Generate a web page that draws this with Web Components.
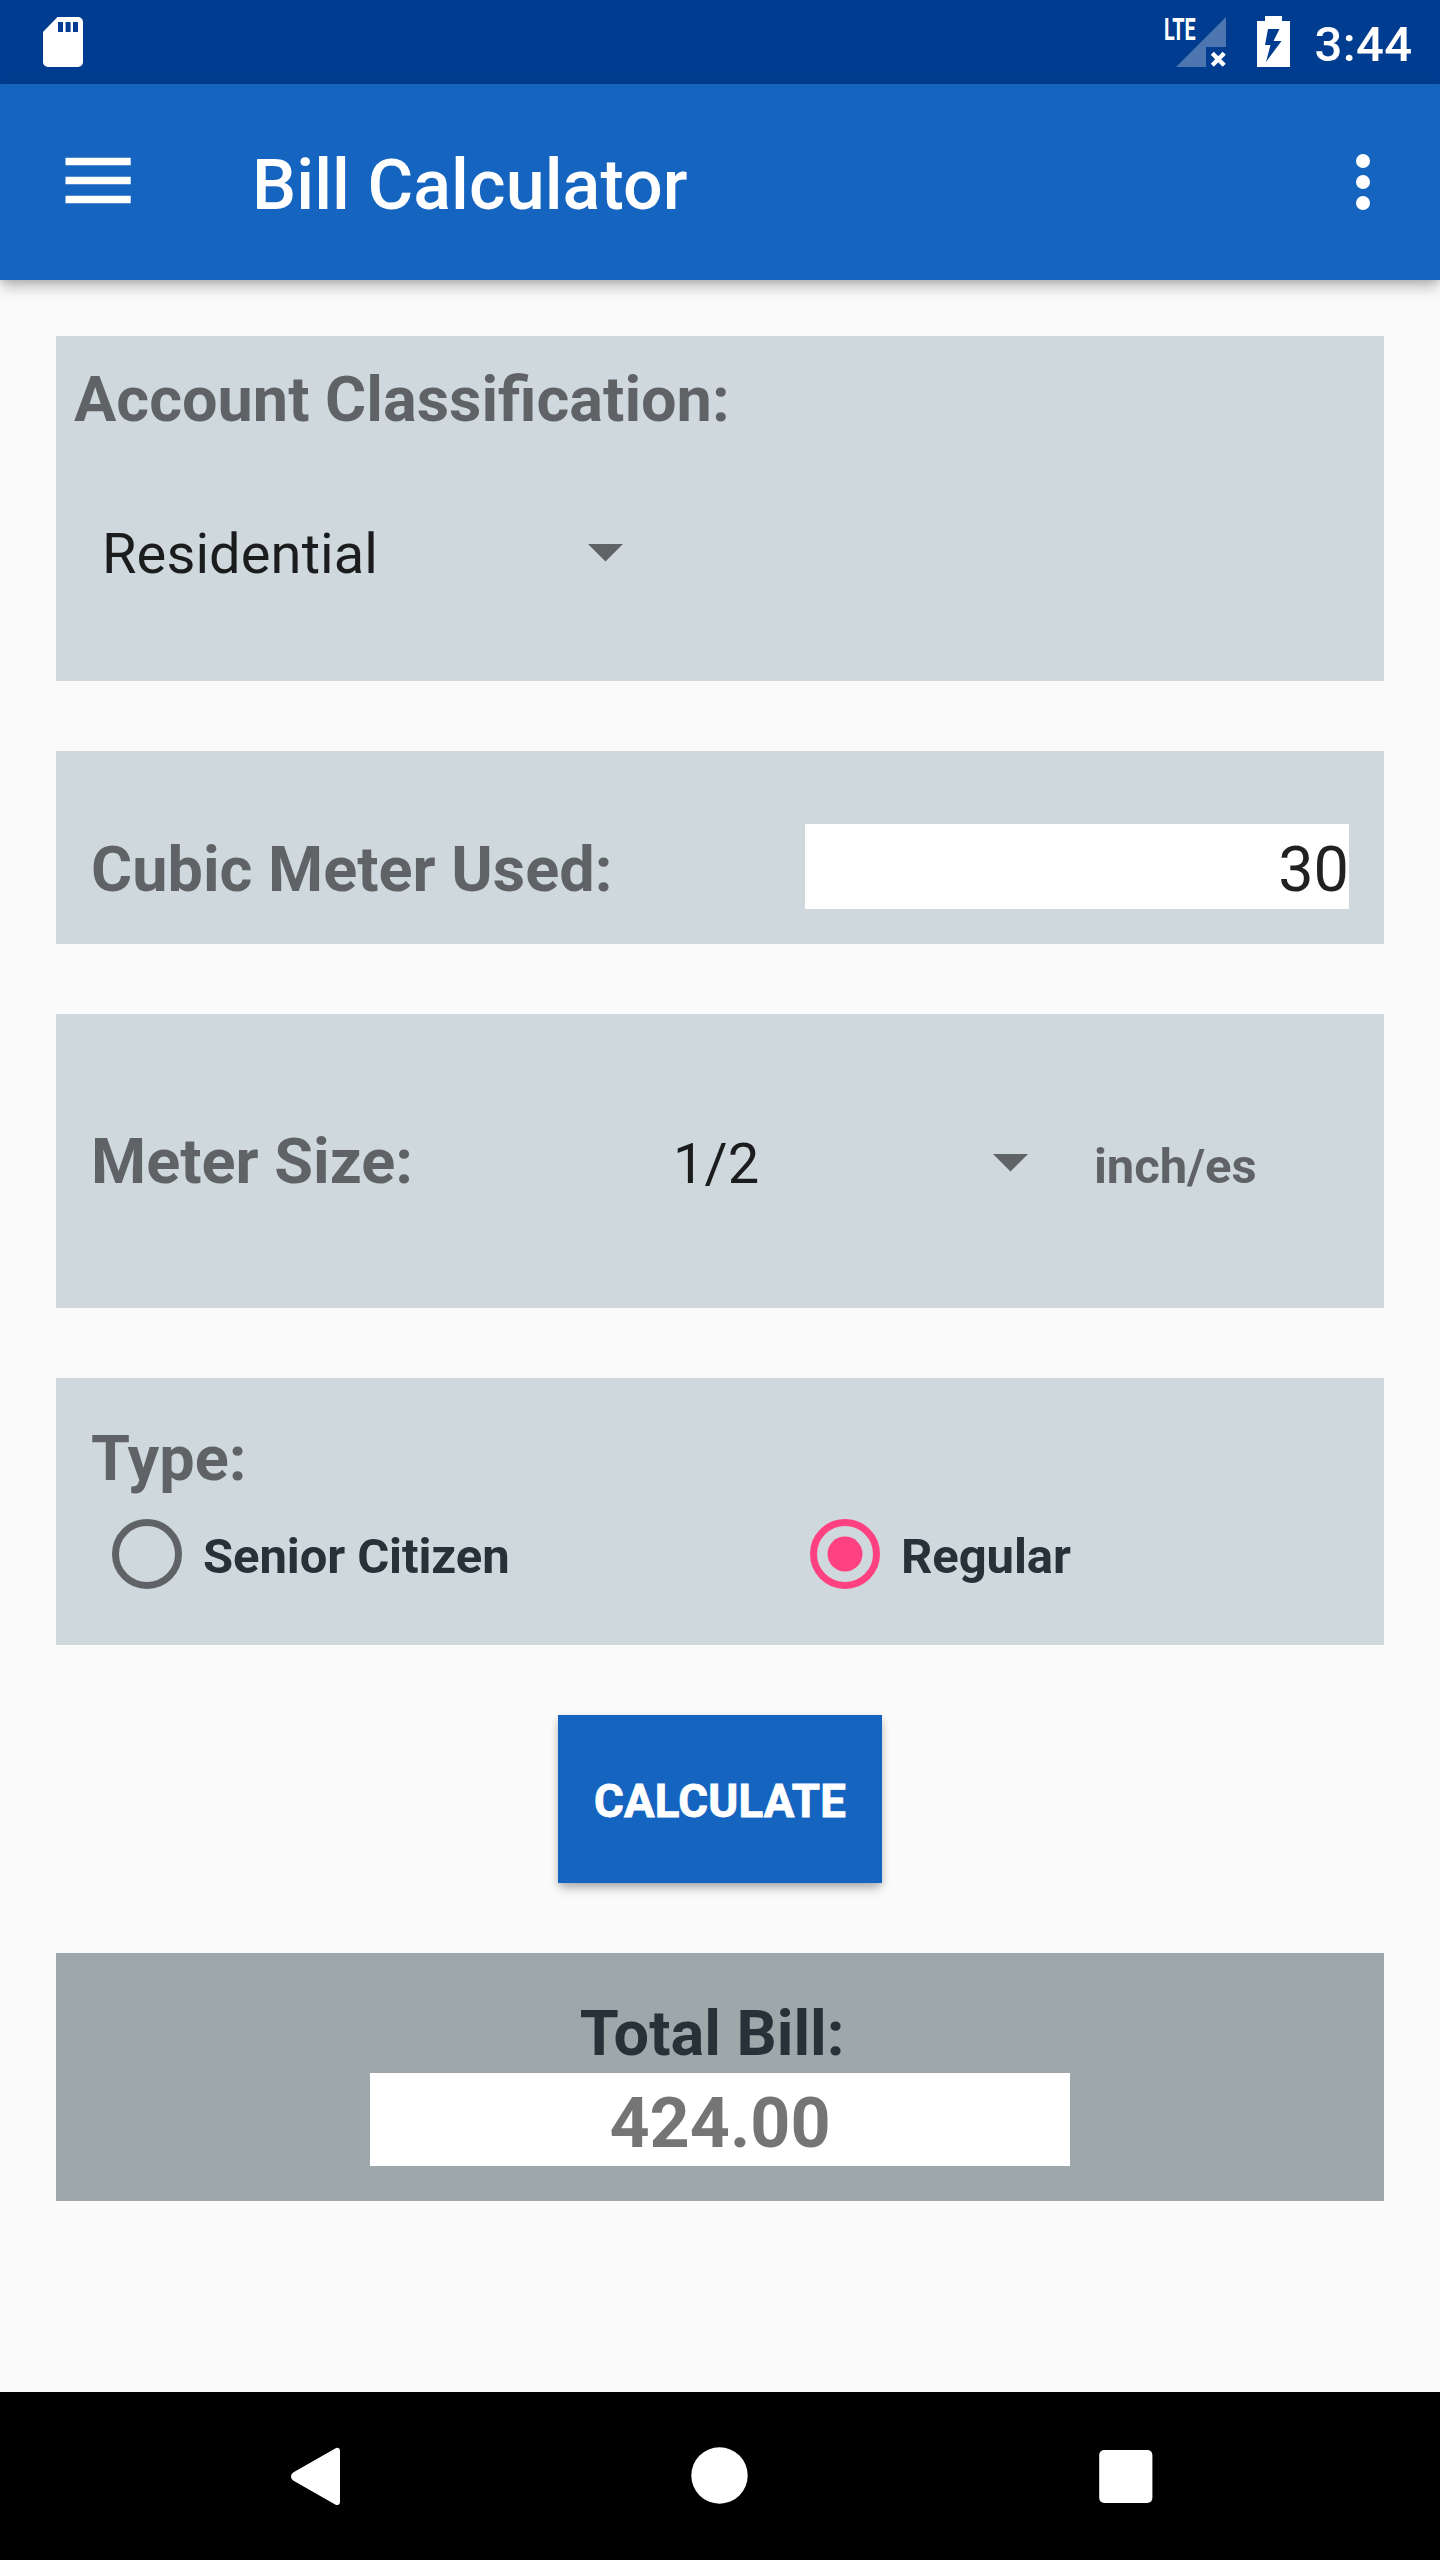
<!DOCTYPE html>
<html lang="en">
<head>
<meta charset="utf-8">
<title>Bill Calculator</title>
<style>
html,body{margin:0;padding:0}
body{width:1440px;height:2560px;overflow:hidden;background:#fafafa;font-family:Roboto,"Liberation Sans",sans-serif}
</style>
</head>
<body>
<bill-app></bill-app>
<script>
const define = (name, html) => {
  const template = document.createElement('template');
  template.innerHTML = html;
  customElements.define(name, class extends HTMLElement {
    constructor() {
      super();
      this.attachShadow({ mode: 'open' }).appendChild(template.content.cloneNode(true));
    }
  });
};

define('status-bar', `
<style>
:host{display:flex;height:84px;background:#003c8f;color:#fff;box-sizing:border-box;padding:0 27.5px 0 43px;align-items:flex-start}
svg{display:block;flex:none}
.sd{margin-top:17px}
.net{display:flex;margin:16px 0 0 auto}
.lte{font-size:31px;font-weight:700;line-height:36px;width:12px;margin-top:-4.5px;white-space:nowrap;transform:scaleX(.64);transform-origin:0 0;letter-spacing:-.3px}
.battery{margin:16px 0 0 30px}
.clock{font-size:49px;font-weight:500;line-height:58px;margin:16px 0 0 24px;letter-spacing:.4px}
</style>
<svg class="sd" width="40" height="50" viewBox="0 0 40 50"><path fill="#fff" fill-rule="evenodd" d="M14.5 0H35a5 5 0 0 1 5 5V45a5 5 0 0 1-5 5H5a5 5 0 0 1-5-5V15ZM15 5V15H20V5ZM22.6 5V15H27.6V5ZM30 5V15H35V5Z"/></svg>
<div class="net">
  <span class="lte">LTE</span>
  <svg width="51" height="52" viewBox="0 0 51 52"><path fill="#fff" fill-opacity=".3" d="M50 1V31H30V51H0Z"/><path stroke="#fff" stroke-width="4.4" d="M36.3 37.3 48.2 49.2M48.2 37.3 36.3 49.2"/></svg>
</div>
<svg class="battery" width="33" height="51" viewBox="0 0 33 51"><path fill="#fff" fill-rule="evenodd" d="M8 0H25V5H33V51H0V5H8ZM11 13 8 29H13.5L9 46 24.5 25H16.5L22.5 13Z"/></svg>
<span class="clock">3:44</span>`);

define('app-bar', `
<style>
:host{display:flex;height:196px;background:#1565c0;color:#fff;position:relative;box-sizing:border-box;padding:0 70px 0 65px;align-items:flex-start;box-shadow:0 7px 14px -1px rgba(0,0,0,.28),0 2px 5px rgba(0,0,0,.08)}
svg{display:block;flex:none}
.menu{margin-top:73px}
.title{font-size:70px;font-weight:500;line-height:82px;margin:60px 0 0 121px;letter-spacing:.08px}
.more{margin:70px 0 0 auto}
</style>
<svg class="menu" width="66" height="47" viewBox="0 0 66 47" fill="#fff"><path d="M.5.7H65.7V8.2H.5ZM.5 19.7H65.7V27.2H.5ZM.5 38.7H65.7V46.2H.5Z"/></svg>
<span class="title"><slot></slot></span>
<svg class="more" width="14" height="56" viewBox="0 0 14 56" fill="#fff"><circle cx="7" cy="7" r="7"/><circle cx="7" cy="28" r="7"/><circle cx="7" cy="49" r="7"/></svg>`);

define('form-card', `
<style>
:host{display:block;background:var(--card,#cfd8dc);box-sizing:border-box}
</style><slot></slot>`);

define('field-label', `
<style>
:host{display:block;font-size:63px;line-height:74px;font-weight:700;color:var(--label,rgba(0,0,0,.54));white-space:nowrap}
</style><slot></slot>`);

define('drop-down', `
<style>
:host{display:flex;justify-content:space-between;font-size:56px;line-height:66px;color:rgba(0,0,0,.87);letter-spacing:.1px}
svg{display:block;margin-top:23px}
</style><span><slot></slot></span>
<svg width="35" height="18" viewBox="0 0 35 18"><path fill="#000" fill-opacity=".54" d="M0 0H35L17.5 17.5Z"/></svg>`);

define('value-box', `
<style>
:host{display:block;background:#fff;box-sizing:border-box;padding-top:9px;white-space:nowrap}
</style><slot></slot>`);

define('radio-option', `
<style>
:host{display:flex;gap:21px;font-size:49px;line-height:58px;font-weight:700;letter-spacing:-.1px;color:#263238;--ring:rgba(0,0,0,.54)}
:host([checked]){--ring:#ff4081}
svg{display:block;flex:none}
.dot{display:none}
:host([checked]) .dot{display:block}
span{margin-top:9px}
</style>
<svg width="70" height="70" viewBox="0 0 70 70"><circle cx="35" cy="35" r="31.5" fill="none" style="stroke:var(--ring)" stroke-width="7"/><circle class="dot" cx="35" cy="35" r="17.5" style="fill:var(--ring)"/></svg>
<span><slot></slot></span>`);

define('raised-button', `
<style>
:host{display:block;width:324px;height:168px;box-sizing:border-box;padding-top:60px;background:#1565c0;color:#fff;text-align:center;font-size:45.5px;line-height:54px;font-weight:700;letter-spacing:.25px;-webkit-text-stroke:.9px #fff;box-shadow:0 7px 10px -2px rgba(0,0,0,.26),0 2px 7px rgba(0,0,0,.12)}
</style><slot></slot>`);

define('nav-bar', `
<style>
:host{display:flex;height:168px;background:#000;box-sizing:border-box;padding:55px 287px 0 290px;justify-content:space-between}
svg{display:block}
</style>
<svg width="50" height="58" viewBox="0 0 50 58"><path fill="#fff" d="M45.2 1.5C47.5 0 50 1.3 50 4V55C50 57.7 47.5 59 45.2 57.5L4 34C0 31.5 0 27.5 4 25Z"/></svg>
<svg width="58" height="58" viewBox="0 0 58 58"><circle cx="28.5" cy="28.5" r="28.2" fill="#fff"/></svg>
<svg width="54" height="58" viewBox="0 0 54 58"><rect x=".2" y="3" width="53.2" height="53" rx="5" fill="#fff"/></svg>`);

define('bill-app', `
<style>
:host{display:flex;flex-direction:column;width:1440px;height:2560px;background:#fafafa}
main{flex:1;display:flex;flex-direction:column;gap:70px;padding:56px 56px 0}
.account{height:345px;padding:27px 18px 0}
.account drop-down{width:520.5px;margin:84px 0 0 28px}
.used{display:flex;justify-content:space-between;height:193px;padding:0 35px}
.used field-label{margin-top:82px}
.used value-box{width:544px;height:85px;margin-top:73px;font-size:63px;line-height:74px;text-align:right;color:rgba(0,0,0,.87)}
.size{display:flex;height:294px;padding:0 35px}
.size field-label{width:582px;margin-top:111px}
.size drop-down{width:355px;margin-top:117px}
.unit{font-size:49px;line-height:58px;font-weight:700;letter-spacing:-.1px;color:rgba(0,0,0,.54);margin:124px 0 0 66px}
.type{height:267px;padding:44px 35px 0}
.options{display:flex;margin:23px 0 0 21px}
.options radio-option{flex:0 0 698px}
.options radio-option[checked]{flex-basis:400px}
raised-button{align-self:center}
.total{--card:#9ea7aa;--label:#263238;height:248px;padding-top:44px;display:flex;flex-direction:column;align-items:center;gap:2px}
.total value-box{width:700px;height:93px;font-size:70px;line-height:82px;font-weight:700;text-align:center;color:#757575}
</style>
<status-bar></status-bar>
<app-bar>Bill Calculator</app-bar>
<main>
  <form-card class="account"><field-label>Account Classification:</field-label><drop-down>Residential</drop-down></form-card>
  <form-card class="used"><field-label>Cubic Meter Used:</field-label><value-box>30</value-box></form-card>
  <form-card class="size"><field-label>Meter Size:</field-label><drop-down>1/2</drop-down><span class="unit">inch/es</span></form-card>
  <form-card class="type"><field-label>Type:</field-label>
    <div class="options"><radio-option>Senior Citizen</radio-option><radio-option checked>Regular</radio-option></div>
  </form-card>
  <raised-button>CALCULATE</raised-button>
  <form-card class="total"><field-label>Total Bill:&nbsp;</field-label><value-box>424.00</value-box></form-card>
</main>
<nav-bar></nav-bar>`);
</script>
</body>
</html>
